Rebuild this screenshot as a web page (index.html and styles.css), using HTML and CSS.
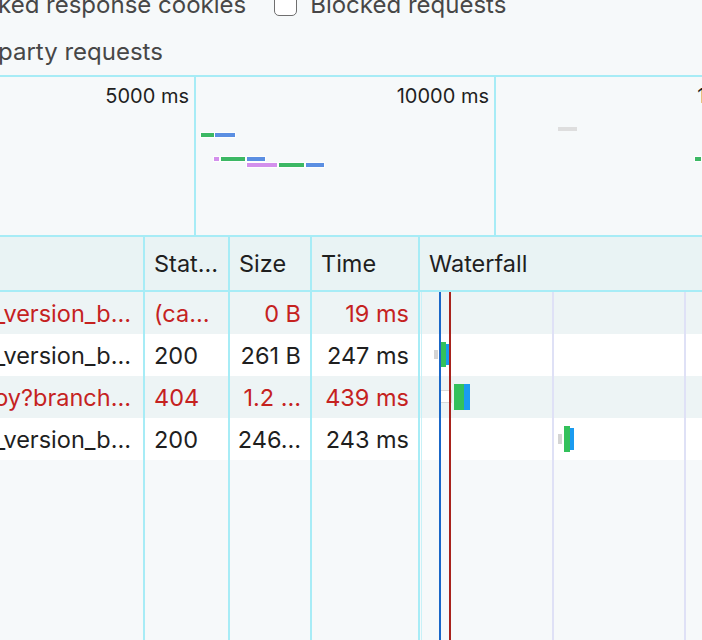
FILE: index.html
```html
<!DOCTYPE html>
<html>
<head>
<meta charset="utf-8">
<link rel="stylesheet" href="styles.css">
</head>
<body>
<div class="page">
  <div class="filters">
    <div class="filter-row first">
      <span class="flabel cut">ked response cookies</span>
      <label class="check"><span class="box"></span><span class="flabel">Blocked requests</span></label>
    </div>
    <div class="filter-row second">
      <span class="flabel cut">party requests</span>
    </div>
  </div>

  <div class="overview">
    <div class="tick" style="left:194px"><span class="tick-label">5000 ms</span></div>
    <div class="tick" style="left:494px"><span class="tick-label">10000 ms</span></div>
    <div class="tick" style="left:794px"><span class="tick-label">15000 ms</span></div>

    <div class="ov-bar green" style="left:201px;top:56px;width:13px"></div>
    <div class="ov-bar blue" style="left:215px;top:56px;width:20px"></div>

    <div class="ov-bar purple" style="left:214px;top:80px;width:5px"></div>
    <div class="ov-bar green" style="left:221px;top:80px;width:24px"></div>
    <div class="ov-bar blue" style="left:247px;top:80px;width:18px"></div>

    <div class="ov-bar purple" style="left:247px;top:86px;width:30px"></div>
    <div class="ov-bar green" style="left:279px;top:86px;width:25px"></div>
    <div class="ov-bar blue" style="left:306px;top:86px;width:18px"></div>

    <div class="ov-bar gray" style="left:558px;top:50px;width:19px"></div>
    <div class="ov-bar green" style="left:695px;top:80px;width:6px"></div>
  </div>

  <div class="table">
    <div class="row head">
      <div class="cell name"></div>
      <div class="cell">Stat…</div>
      <div class="cell">Size</div>
      <div class="cell">Time</div>
      <div class="cell last">Waterfall</div>
    </div>

    <div class="body">
      <div class="row odd error">
        <div class="cell name">_version_b…</div>
        <div class="cell">(ca…</div>
        <div class="cell num">0 B</div>
        <div class="cell num">19 ms</div>
        <div class="cell last wf"></div>
      </div>
      <div class="row even">
        <div class="cell name">_version_b…</div>
        <div class="cell">200</div>
        <div class="cell num">261 B</div>
        <div class="cell num">247 ms</div>
        <div class="cell last wf">
          <span class="wbar queue" style="left:14px;top:16px;width:4px;height:9px"></span>
          <span class="wbar wait" style="left:20px;top:8px;width:6px;height:25px"></span>
          <span class="wbar dl" style="left:26px;top:10px;width:3px;height:21px"></span>
        </div>
      </div>
      <div class="row odd error">
        <div class="cell name">oy?branch…</div>
        <div class="cell">404</div>
        <div class="cell num">1.2 …</div>
        <div class="cell num">439 ms</div>
        <div class="cell last wf">
          <span class="wbar stall" style="left:19px;top:14px;width:13px;height:13px"></span>
          <span class="wbar wait" style="left:34px;top:8px;width:10px;height:26px"></span>
          <span class="wbar dl" style="left:44px;top:8px;width:6px;height:26px"></span>
        </div>
      </div>
      <div class="row even">
        <div class="cell name">_version_b…</div>
        <div class="cell">200</div>
        <div class="cell num">246…</div>
        <div class="cell num">243 ms</div>
        <div class="cell last wf">
          <span class="wbar queue" style="left:138px;top:16px;width:4px;height:10px"></span>
          <span class="wbar wait" style="left:144px;top:8px;width:6px;height:26px"></span>
          <span class="wbar dl" style="left:150px;top:10px;width:4px;height:22px"></span>
        </div>
      </div>
      <div class="row filler">
        <div class="cell name"></div>
        <div class="cell"></div>
        <div class="cell"></div>
        <div class="cell"></div>
        <div class="cell last"></div>
      </div>

      <div class="wf-lines">
        <span class="vline edge" style="left:421px"></span>
        <span class="vline dcl" style="left:439px"></span>
        <span class="vline load" style="left:449px"></span>
        <span class="vline grid" style="left:552px"></span>
        <span class="vline grid" style="left:684px"></span>
      </div>
    </div>
  </div>
</div>
</body>
</html>
```

FILE: styles.css
```css
html, body {
  margin: 0;
  padding: 0;
}
body {
  width: 702px;
  height: 640px;
  overflow: hidden;
  background: #f6f9fa;
  font-family: Inter, "Noto Sans", sans-serif;
  color: #1f1f1f;
}
.page {
  display: flex;
  flex-direction: column;
  height: 640px;
}

/* filters */
.filters {
  height: 75px;
  flex: none;
  overflow: hidden;
  display: flex;
  flex-direction: column;
}
.filter-row {
  display: flex;
  align-items: center;
  height: 30px;
  font-size: 24px;
  color: #474747;
  white-space: nowrap;
}
.filter-row.first {
  margin-top: -11px;
  gap: 28px;
}
.filter-row.second {
  margin-top: 17px;
}
.cut {
  margin-left: -2px;
}
.check {
  display: flex;
  align-items: center;
  gap: 13px;
}
.box {
  width: 21px;
  height: 21px;
  border: 1.5px solid #6f6f6f;
  border-radius: 5px;
  background: #fff;
}

/* overview */
.overview {
  position: relative;
  flex: none;
  height: 158px;
  border-top: 2px solid #a7ecf6;
  border-bottom: 2px solid #a7ecf6;
  overflow: hidden;
}
.tick {
  position: absolute;
  top: 0;
  bottom: 0;
  width: 2px;
  background: #a7ecf6;
}
.tick-label {
  position: absolute;
  right: 7px;
  top: 7px;
  font-size: 20px;
  white-space: nowrap;
  color: #1f1f1f;
}
.ov-bar {
  position: absolute;
  height: 4px;
  box-shadow: 0 0 0 1px rgba(255,255,255,0.8);
}
.ov-bar.green { background: #3cb864; }
.ov-bar.blue { background: #5b8fe2; }
.ov-bar.purple { background: #d390ec; }
.ov-bar.gray { background: #dedede; box-shadow: none; }

/* table */
.table {
  flex: 1;
  display: flex;
  flex-direction: column;
  font-size: 23.5px;
}
.row {
  display: grid;
  grid-template-columns: 145px 85px 82px 108px 1fr;
}
.cell {
  box-sizing: border-box;
  border-right: 2px solid #a7ecf6;
  padding: 0 9px;
  display: flex;
  align-items: center;
  white-space: nowrap;
  overflow: hidden;
}
.cell.last {
  border-right: none;
}
.cell.num {
  justify-content: flex-end;
}
.cell.name {
  justify-content: flex-end;
  padding: 0 12px 0 0;
}
.head {
  height: 55px;
  flex: none;
  background: #e9f3f4;
  border-bottom: 2px solid #a7ecf6;
  box-sizing: border-box;
}
.body {
  position: relative;
  flex: 1;
  display: flex;
  flex-direction: column;
}
.row.odd, .row.even {
  height: 42px;
  flex: none;
}
.row.odd { background: #edf4f5; }
.row.even { background: #ffffff; }
.row.error { color: #c5221f; }
.row.filler {
  flex: 1;
}
.wf {
  position: relative;
  overflow: visible;
}
.wbar {
  position: absolute;
  display: block;
}
.wbar.queue { background: #d4d4d4; }
.wbar.stall { background: #fff; box-sizing: border-box; border: 1.5px solid #d9d9d9; }
.wbar.wait { background: #33c15b; }
.wbar.dl { background: #1a9bf0; }

.wf-lines {
  position: absolute;
  top: 0;
  bottom: 0;
  left: 0;
  right: 0;
  pointer-events: none;
}
.vline {
  position: absolute;
  top: 0;
  bottom: 0;
  width: 2px;
}
.vline.edge { width: 1px; background: #c9f1f7; }
.vline.dcl { background: #1a67c8; }
.vline.load { background: #a8231c; }
.vline.grid { width: 1.5px; background: #dfe1f6; }
```
